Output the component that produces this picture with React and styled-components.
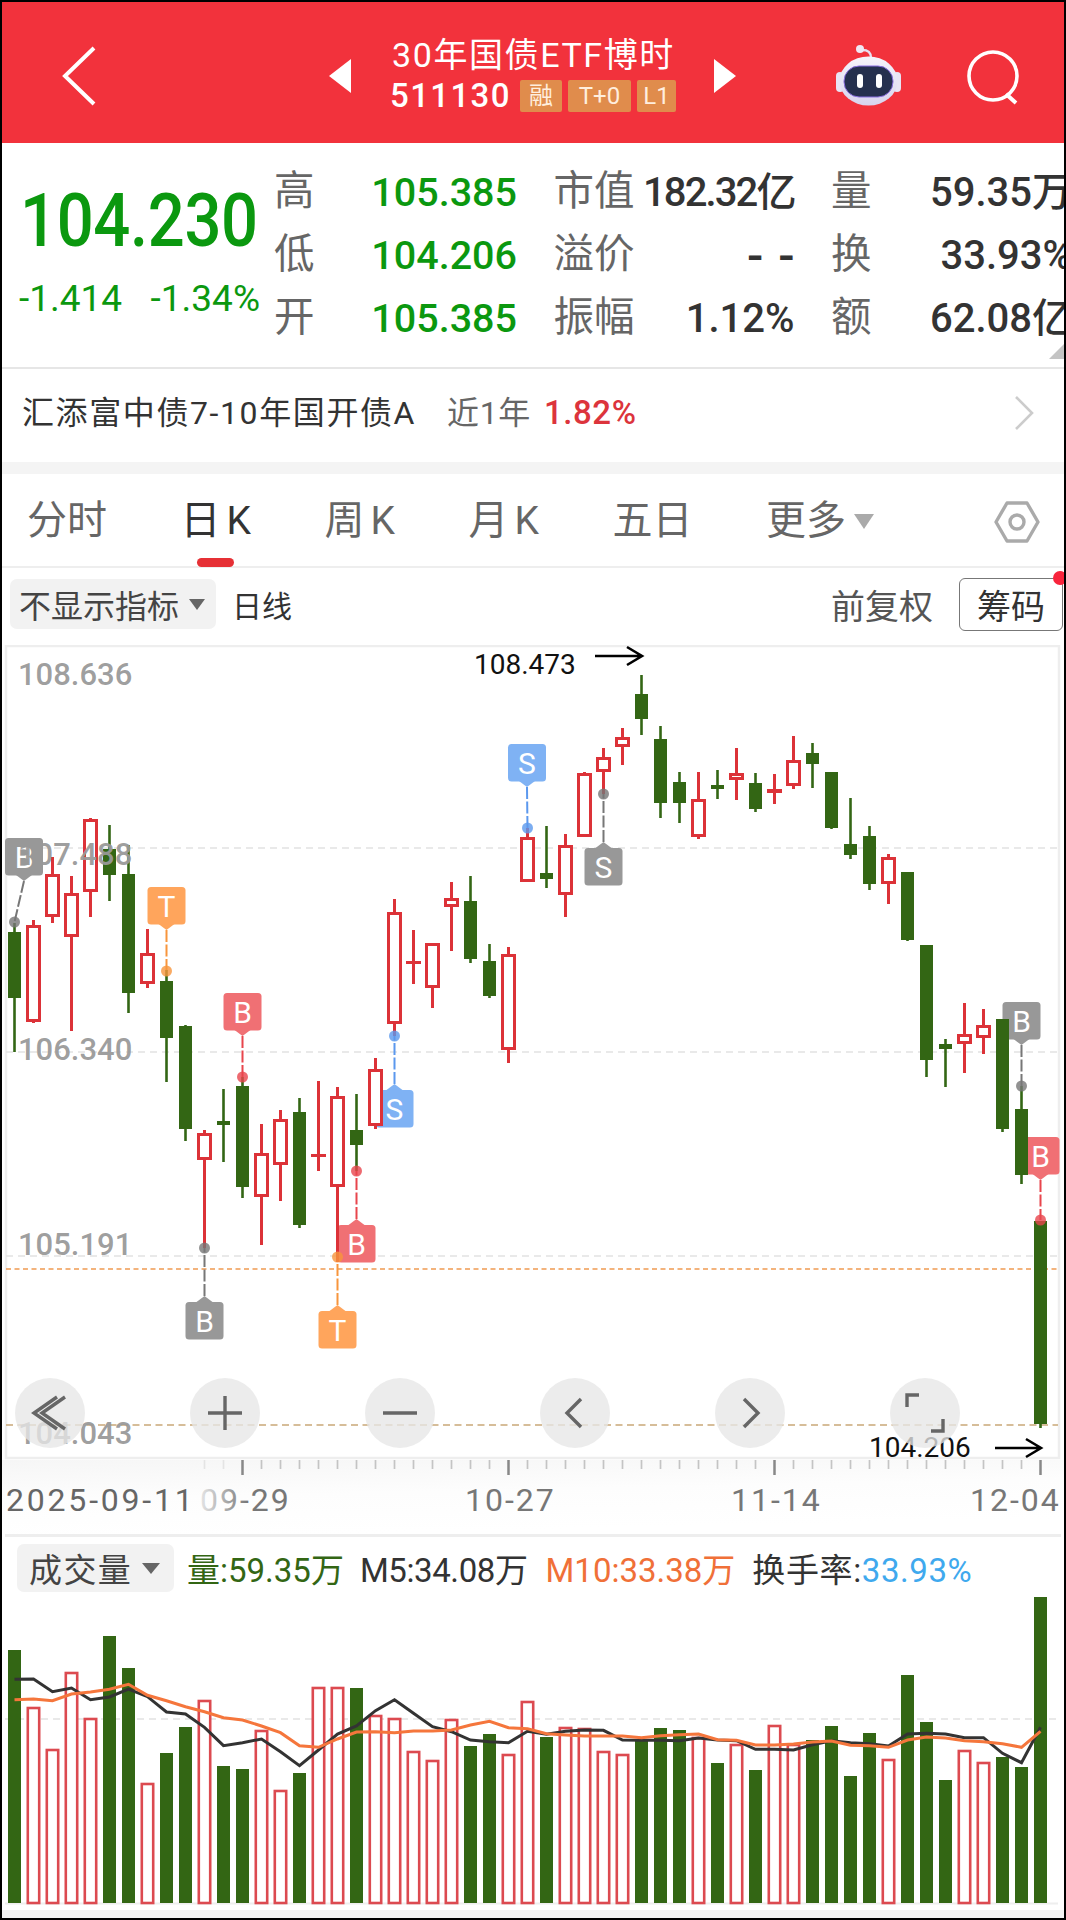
import React from "react";
import styled, { createGlobalStyle } from "styled-components";

const FONT = `Roboto, "Noto Sans CJK SC", sans-serif`;
const RED = "#dc3238";
const GREEN = "#336614";

const Global = createGlobalStyle`
  html, body { margin: 0; padding: 0; background: #000; }
  * { box-sizing: border-box; }
`;

const Page = styled.div`
  width: 1066px; height: 1920px; overflow: hidden; position: relative;
  background: #fff; border: 2px solid #000; font-family: ${FONT};
`;

/* ---------- header ---------- */
const Header = styled.header`
  height: 141px; background: #f2323c; color: #fff;
  display: flex; align-items: flex-start; position: relative;
`;
const BackBtn = styled.div`
  width: 327px; padding: 44px 0 0 59px; flex: none;
  svg { display: block; }
`;
const Tri = styled.div`
  width: 0; height: 0; margin-top: 57px; flex: none;
  border-top: 17px solid transparent; border-bottom: 17px solid transparent;
  ${p => p.$right ? "border-left: 22px solid #fff;" : "border-right: 22px solid #fff;"}
`;
const TitleBox = styled.div`
  width: 363px; flex: none; padding-left: 39px; padding-top: 33px;
`;
const Title = styled.div`
  font-size: 34px; line-height: 40px; letter-spacing: 1.6px; font-weight: 400; white-space: nowrap; margin-left: 2px;
`;
const CodeRow = styled.div`
  display: flex; align-items: center; gap: 6px; margin-top: 5px; height: 32px;
`;
const Code = styled.span`
  font-size: 33px; letter-spacing: 1.4px; font-weight: 500; width: 124px; line-height: 32px;
`;
const Tag = styled.span`
  height: 32px; background: #e08c4c; border-radius: 2px; color: #ffeede;
  font-size: 24px; line-height: 32px; text-align: center; width: ${p => p.$w}px;
`;
const HeadIcons = styled.div`
  display: flex; align-items: flex-start; padding: 42px 0 0 99px; gap: 64px;
  svg { display: block; flex: none; }
`;

/* ---------- quote ---------- */
const Quote = styled.section`
  height: 226px; display: flex; position: relative; overflow: hidden;
  border-bottom: 2px solid #e6e6e6;
`;
const PriceCol = styled.div`
  width: 272px; flex: none; color: #0b980f; padding-left: 18px;
`;
const Price = styled.div`
  font-size: 74px; line-height: 76px; font-weight: 500; letter-spacing: -0.4px; margin-top: 40px;
  transform: scaleX(.88); transform-origin: left center;
`;
const SubPrices = styled.div`
  display: flex; justify-content: space-between;
  margin: 20px 0 0 -1px; font-size: 37px; line-height: 40px; width: 241px; white-space: nowrap;
`;
const Stats = styled.div`
  display: grid; grid-template-columns: 243px 241px 241px; column-gap: 36.5px;
  grid-auto-rows: 63px; padding-top: 18px; flex: none;
`;
const Stat = styled.div`
  display: flex; justify-content: space-between; align-items: center; white-space: nowrap;
`;
const StatLabel = styled.span`
  font-size: 40.5px; color: #666; line-height: 50px; margin-top: -4px;
`;
const StatValue = styled.span`
  font-size: ${p => p.$fs || 40}px; line-height: 50px; font-weight: 500;
  color: ${p => p.$green ? "#0b980f" : "#333"}; letter-spacing: ${p => p.$ls || 0}px;
  margin-right: ${p => p.$mr || 0}px;
`;
const Corner = styled.div`
  position: absolute; right: 0; bottom: 8px; width: 0; height: 0;
  border-left: 15px solid transparent; border-bottom: 15px solid #c4c4c4;
`;

/* ---------- fund ---------- */
const FundRow = styled.div`
  height: 93px; display: flex; align-items: center; padding: 0 30px 5px 20px;
  font-size: 32px; line-height: 40px; white-space: nowrap;
`;
const FundName = styled.span` color: #333; letter-spacing: 1.6px; `;
const FundTerm = styled.span` color: #666; margin-left: 31px; letter-spacing: 0.6px; `;
const FundRate = styled.span` color: #dc343c; margin-left: 13px; font-weight: 500; font-size: 33px; letter-spacing: .6px; `;
const FundArrow = styled.span` margin-left: auto; display: flex; `;

const Gap = styled.div` height: 12px; background: #f4f4f4; `;

/* ---------- tabs ---------- */
const Tabs = styled.nav`
  height: 94px; display: flex; align-items: center; padding: 0 0 2px 25px; gap: 73.5px; position: relative;
  border-bottom: 2px solid #eee;
`;
const Tab = styled.span`
  font-size: 40px; line-height: 50px; color: ${p => p.$on ? "#333" : "#666"}; display: flex; align-items: center;
  position: relative; margin-top: 4px; white-space: nowrap;
  ${p => p.$on && `&::after { content:""; position:absolute; left: 16px; right: 17px; bottom: -21px; height: 9px; border-radius: 5px; background: #e63035; }`}
`;
const KLetter = styled.span` margin-left: 6px; font-size: 39px; `;
const Caret = styled.i`
  display: inline-block; width: 0; height: 0; margin-left: ${p => p.$ml}px;
  border-left: ${p => p.$s}px solid transparent; border-right: ${p => p.$s}px solid transparent;
  border-top: ${p => p.$h}px solid ${p => p.$c};
`;
const Hex = styled.span` position: absolute; left: 992px; top: 26px; display: flex; `;

/* ---------- toolbar ---------- */
const Toolbar = styled.div`
  height: 77px; display: flex; align-items: center; padding: 0 1px 5px 8px; 
`;
const Pill = styled.div`
  height: 50px; padding: 0 11px 0 9px; background: #f2f2f2; border-radius: 7px; display: flex; align-items: center;
  font-size: 32px; color: #444; white-space: nowrap;
`;
const Period = styled.span` font-size: 30px; color: #333; margin-left: 16px; `;
const Adjust = styled.span` margin-left: auto; font-size: 34px; color: #555; `;
const ChipBtn = styled.span`
  margin-left: 26px; width: 104px; height: 53px; border: 1.5px solid #777; border-radius: 6px; font-size: 34px; color: #333;
  display: flex; align-items: center; justify-content: center; position: relative;
  &::after { content:""; position:absolute; right: -5px; top: -8px; width: 14px; height: 14px; border-radius: 50%; background: #f8243c; }
`;

/* ---------- chart ---------- */
const ChartWrap = styled.div` position: relative; height: 815px; `;
const ChartSvg = styled.svg` display: block; font-family: ${FONT}; `;
const FloatBar = styled.div`
  position: absolute; left: 13px; top: 733px; display: flex; gap: 105px;
`;
const RoundBtn = styled.div`
  width: 70px; height: 70px; border-radius: 50%; background: rgba(231,231,231,.78);
  display: flex; align-items: center; justify-content: center;
`;

/* ---------- axis ---------- */
const AxisSvg = styled.svg` display: block; font-family: ${FONT}; `;

/* ---------- volume ---------- */
const VolPanel = styled.section`
  border-top: 3px solid #eee; margin-left: 3px; margin-right: 3px; height: 376px; position: relative;
`;
const Legend = styled.div`
  position: absolute; left: 12px; top: 7px; display: flex; align-items: center; white-space: nowrap; font-size: 33px;
`;
const VolPill = styled(Pill)` height: 48px; width: 157px; padding: 0 0 0 12px; font-size: 33px; letter-spacing: 1.4px; margin-right: 13px; `;
const LegendItem = styled.span`
  color: ${p => p.$c}; margin-right: ${p => p.$mr}px; letter-spacing: ${p => p.$ls || 0}px;
  b { font-weight: 400; color: ${p => p.$v || "inherit"}; }
`;
const VolSvg = styled.svg` display: block; `;
const Foot = styled.div` height: 8px; background: #f4f4f4; `;

/* ---------- data ---------- */
const X = i => 14.5 + 19 * i;
// [color, high, bodyTop, bodyBottom, low]
const C = [
  ["g",923,932,998,1052],["r",920,925,1022,1023],["r",857,874,917,923],["r",876,893,937,1031],["r",818,819,892,917],
  ["g",825,849,875,901],["g",845,874,993,1013],["r",929,953,984,988],["g",970,981,1038,1082],["g",1025,1026,1129,1141],
  ["r",1130,1133,1160,1248],["g",1089,1121,1125,1162],["g",1077,1086,1187,1198],["r",1124,1153,1197,1245],["r",1110,1119,1165,1201],
  ["g",1098,1112,1225,1228],["r",1081,1154,1156,1171],["r",1087,1096,1187,1262],["g",1094,1130,1145,1171],["r",1058,1069,1126,1129],
  ["r",899,912,1024,1036],["r",930,961,964,984],["r",943,943,988,1008],["r",882,898,907,951],["g",876,901,959,963],
  ["g",944,961,996,998],["r",947,954,1050,1063],["r",828,837,882,882],["g",826,873,879,888],["r",834,845,895,917],
  ["r",772,773,837,837],["r",748,757,772,794],["r",728,737,747,765],["g",675,694,719,735],["g",726,739,803,818],
  ["g",772,782,803,823],["r",772,799,837,839],["g",770,785,786,799],["r",748,773,780,800],["g",773,783,809,812],
  ["r",774,789,793,804],["r",736,760,786,789],["g",743,753,764,788],["g",772,772,828,829],["g",798,844,855,859],
  ["g",826,836,884,890],["r",854,857,884,904],["g",872,872,940,941],["g",945,945,1060,1077],["g",1039,1044,1049,1087],
  ["r",1003,1034,1044,1073],["r",1009,1025,1038,1054],["g",1019,1019,1129,1132],["g",1086,1109,1175,1184],["g",1221,1221,1424,1428],
];
// [letter, colour, boxCenterX, boxTop, dotIndex, dotY, dir]
const MC = { gray: "#989898", red: "#f07074", blue: "#7fb2f4", orange: "#ffa55c" };
const LC = { gray: "#777", red: "#e8454c", blue: "#5b98ee", orange: "#f8953c" };
const M = [
  ["B","gray",24,838,0,922,"down"],
  ["T","orange",166.5,887,8,971,"down"],
  ["B","red",242.5,993,12,1077,"down"],
  ["S","blue",394.5,1090,20,1036,"up"],
  ["B","red",356.5,1225,18,1171,"up"],
  ["T","orange",337.5,1311,17,1257,"up"],
  ["B","gray",204.5,1302,10,1248,"up"],
  ["S","blue",527,744,27,828,"down"],
  ["S","gray",603.5,848,31,794,"up"],
  ["B","gray",1021.5,1002,53,1086,"down"],
  ["B","red",1040.5,1137,54,1220,"down"],
];
const YL = [["108.636",685],["107.488",865],["106.340",1060],["105.191",1255],["104.043",1444]];
const VT = [1650,1708,1750,1673,1719,1636,1668,1784,1753,1727,1701,1766,1769,1731,1791,1773,1688,1688,1688,1716,1719,1752,1761,1720,1746,1734,1755,1702,1737,1728,1729,1752,1755,1740,1728,1730,1738,1763,1745,1770,1726,1745,1740,1726,1776,1733,1760,1675,1722,1780,1751,1763,1757,1767,1597];
const M5 = [268,267,305,294,329,321,297,320,366,372,412,467,458,447,485,527,480,432,408,362,329,370,410,425,450,455,458,424,433,424,420,421,450,451,451,452,444,450,452,478,478,480,464,452,458,461,468,432,430,432,443,443,490,518,412];
const M10 = [329,327,332,312,306,298,283,316,332,350,365,383,390,408,428,467,472,447,426,425,428,423,423,420,405,394,413,416,431,435,438,438,438,443,437,434,432,449,451,465,465,462,456,453,466,467,472,450,441,444,452,455,461,472,424];
const line = a => a.map((v, i) => `${X(i)},${(1590 + v / 3).toFixed(1)}`).join(" ");

/* ---------- chart parts ---------- */
const Marker = ({ m }) => {
  const [l, c, bx, by, i, dy, dir] = m;
  const dx = X(i);
  const down = dir === "down";
  const tipY = down ? by + 43 : by - 6;
  const pts = down
    ? `${bx - 8},${by + 37} ${bx + 8},${by + 37} ${bx},${tipY}`
    : `${bx - 8},${by} ${bx + 8},${by} ${bx},${tipY}`;
  return (
    <g>
      <rect x={bx - 19} y={by} width={38} height={37.5} rx={3.5} fill={MC[c]} />
      <polygon points={pts} fill={MC[c]} />
      <line x1={bx} y1={tipY} x2={dx} y2={dy} stroke={LC[c]} strokeWidth={2} strokeDasharray="12 2.5" />
      <text x={bx} y={by + 29.5} textAnchor="middle" fontSize={30} fill="#fff">{l}</text>
    </g>
  );
};

const Candle = ({ c, i }) => {
  const [k, h, t, b, l] = c;
  const x = X(i);
  if (k === "g") {
    return (
      <g>
        <line x1={x} y1={h} x2={x} y2={l} stroke={GREEN} strokeWidth={2.6} />
        <rect x={x - 6.5} y={t} width={13} height={Math.max(b - t, 4)} fill={GREEN} />
      </g>
    );
  }
  const thin = b - t < 5;
  return (
    <g>
      <line x1={x} y1={h} x2={x} y2={l} stroke={RED} strokeWidth={3} />
      {thin
        ? <rect x={x - 7.5} y={t} width={15} height={Math.max(b - t, 3)} fill={RED} />
        : <rect x={x - 6} y={t + 1.5} width={12} height={b - t - 3} fill="#fff" stroke={RED} strokeWidth={3} />}
    </g>
  );
};

const Arrow = ({ x1, x2, y }) => (
  <path d={`M${x1} ${y}H${x2}M${x2 - 15} ${y - 9}L${x2} ${y}L${x2 - 15} ${y + 9}`} fill="none" stroke="#000" strokeWidth={2.6} />
);

const Chart = () => (
  <ChartSvg width={1062} height={815} viewBox="2 645 1062 815">
    <rect x={6} y={646} width={1053} height={812} fill="#fff" stroke="#eee" strokeWidth={2.5} />
    {[848, 1052, 1256].map(y => (
      <line key={y} x1={6} x2={1058} y1={y} y2={y} stroke="#e2e2e2" strokeWidth={1.5} strokeDasharray="7 5" />
    ))}
    <line x1={6} x2={1058} y1={1269} y2={1269} stroke="#ef9a52" strokeWidth={1.7} strokeDasharray="5 3.5" />
    <line x1={6} x2={1058} y1={1425} y2={1425} stroke="#c9a878" strokeWidth={1.7} strokeDasharray="7 4.5" />
    {M.map((m, i) => <Marker key={i} m={m} />)}
    {C.map((c, i) => <Candle key={i} c={c} i={i} />)}
    {M.map((m, i) => <circle key={i} cx={X(m[4])} cy={m[5]} r={5.5} fill={LC[m[1]]} opacity={0.8} />)}
    {YL.map(([t, y]) => (
      <text key={t} x={18} y={y} fontSize={31} fontWeight={500} fill="#999" fillOpacity={0.95}>{t}</text>
    ))}
    <text x={474} y={674} fontSize={28} fill="#111">108.473</text>
    <Arrow x1={595} x2={642} y={656} />
    <text x={869} y={1457} fontSize={28} fill="#111">104.206</text>
    <Arrow x1={995} x2={1041} y={1448} />
  </ChartSvg>
);

const S = { fill: "none", stroke: "#666", strokeWidth: 3.4 };
const Buttons = () => (
  <FloatBar>
    <RoundBtn><svg width="40" height="40" viewBox="0 0 40 40"><path d="M27 4L4 20l23 16M35 4L12 20l23 16" {...S} /></svg></RoundBtn>
    <RoundBtn><svg width="40" height="40" viewBox="0 0 40 40"><path d="M3 20H37M20 3V37" {...S} /></svg></RoundBtn>
    <RoundBtn><svg width="40" height="40" viewBox="0 0 40 40"><path d="M3 20H37" {...S} /></svg></RoundBtn>
    <RoundBtn><svg width="40" height="40" viewBox="0 0 40 40"><path d="M26 6L12 20l14 14" {...S} /></svg></RoundBtn>
    <RoundBtn><svg width="40" height="40" viewBox="0 0 40 40"><path d="M14 6l14 14-14 14" {...S} /></svg></RoundBtn>
    <RoundBtn><svg width="40" height="40" viewBox="0 0 40 40"><path d="M2 14V2H14M38 26V38H26" {...S} /></svg></RoundBtn>
  </FloatBar>
);

const Axis = () => {
  const ticks = [];
  for (let i = 10; i < 55; i++) ticks.push(i);
  const major = { 12: 1, 26: 1, 40: 1, 54: 1 };
  return (
    <AxisSvg width={1062} height={74} viewBox="2 1460 1062 74">
      <defs>
        <linearGradient id="axbg" x1="0" y1="0" x2="0.3" y2="1">
          <stop offset="0" stopColor="#f6f6f6" /><stop offset="0.5" stopColor="#fdfdfd" /><stop offset="1" stopColor="#fff" />
        </linearGradient>
        <linearGradient id="fadeText" gradientUnits="userSpaceOnUse" x1="198" y1="0" x2="248" y2="0">
          <stop offset="0" stopColor="#eaeaea" /><stop offset="1" stopColor="#777" />
        </linearGradient>
      </defs>
      <rect x={2} y={1460} width={1062} height={74} fill="url(#axbg)" />
      {ticks.map(i => (
        <line key={i} x1={X(i)} x2={X(i)} y1={1460} y2={major[i] ? 1475 : 1469}
          stroke={major[i] ? "#888" : i < 12 ? "#e4e4e4" : "#c4c4c4"} strokeWidth={major[i] ? 2.5 : 1.7} />
      ))}
      {[["2025-09-11", 6], ["09-29", 200], ["10-27", 465], ["11-14", 731], ["12-04", 970]].map(([t, x], i) => (
        <text key={t} x={x} y={1511} fontSize={32} letterSpacing={i === 0 ? 2.8 : 2}
          fill={i === 0 ? "#666" : i === 1 ? "url(#fadeText)" : "#777"}>{t}</text>
      ))}
    </AxisSvg>
  );
};

const Volume = () => (
  <VolSvg width={1056} height={373} viewBox="5 1537 1056 373">
    <rect x={5} y={1537} width={1056} height={373} fill="#fff" />
    <line x1={5} x2={1058} y1={1719} y2={1719} stroke="#e2e2e2" strokeWidth={1.5} strokeDasharray="7 5" />
    <line x1={5} x2={1058} y1={1903.5} y2={1903.5} stroke="#eee" strokeWidth={2} />
    {VT.map((t, i) => C[i][0] === "g"
      ? <rect key={i} x={X(i) - 6.5} y={t} width={13} height={1903 - t} fill={GREEN} />
      : <rect key={i} x={X(i) - 5.7} y={t} width={11.4} height={1903 - t} fill="#fff" stroke="#dc4a50" strokeWidth={2.6} />)}
    <polyline points={line(M5)} fill="none" stroke="#333" strokeWidth={3} />
    <polyline points={line(M10)} fill="none" stroke="#f5763c" strokeWidth={3} />
  </VolSvg>
);

const Robot = () => (
  <svg width="68" height="62" viewBox="0 0 68 62">
    <defs>
      <linearGradient id="rh" x1="0" y1="0" x2="0" y2="1">
        <stop offset="0" stopColor="#f6f4fb" /><stop offset="1" stopColor="#d8d4ee" />
      </linearGradient>
    </defs>
    <path d="M36 14C36 8 33 6 27 6" fill="none" stroke="#e6e0f2" strokeWidth="2.4" />
    <circle cx="25" cy="5" r="4" fill="#f0e8f4" />
    <rect x="1" y="28" width="8" height="20" rx="4" fill="#e8e4f4" />
    <rect x="58" y="28" width="8" height="20" rx="4" fill="#e8e4f4" />
    <ellipse cx="33.5" cy="37" rx="29" ry="24.5" fill="url(#rh)" />
    <rect x="9" y="22" width="49" height="31" rx="15" fill="#25304e" stroke="#8a6fe0" strokeWidth="1" />
    <rect x="22" y="30" width="6" height="14" rx="3" fill="#fff" />
    <rect x="41" y="30" width="6" height="14" rx="3" fill="#fff" />
  </svg>
);

const SearchIcon = styled.svg` margin-top: 6px; `;

export default function App() {
  return (
    <Page>
      <Global />
      <Header>
        <BackBtn>
          <svg width="36" height="60" viewBox="0 0 36 60"><path d="M33 2L4 30l29 28" fill="none" stroke="#fff" strokeWidth="4" strokeLinejoin="miter" /></svg>
        </BackBtn>
        <Tri />
        <TitleBox>
          <Title>30年国债ETF博时</Title>
          <CodeRow>
            <Code>511130</Code>
            <Tag $w={42}>融</Tag>
            <Tag $w={63}>T+0</Tag>
            <Tag $w={39}>L1</Tag>
          </CodeRow>
        </TitleBox>
        <Tri $right />
        <HeadIcons>
          <Robot />
          <SearchIcon width="58" height="58" viewBox="0 0 58 58">
            <circle cx="26" cy="26" r="24" fill="none" stroke="#fff" strokeWidth="3.6" />
            <path d="M39 44L49 53" stroke="#fff" strokeWidth="4" />
          </SearchIcon>
        </HeadIcons>
      </Header>

      <Quote>
        <PriceCol>
          <Price>104.230</Price>
          <SubPrices><span>-1.414</span><span>-1.34%</span></SubPrices>
        </PriceCol>
        <Stats>
          <Stat><StatLabel>高</StatLabel><StatValue $green $fs={39.5}>105.385</StatValue></Stat>
          <Stat><StatLabel>市值</StatLabel><StatValue $ls={-1.9}>182.32亿</StatValue></Stat>
          <Stat><StatLabel>量</StatLabel><StatValue>59.35万</StatValue></Stat>
          <Stat><StatLabel>低</StatLabel><StatValue $green $fs={39.5}>104.206</StatValue></Stat>
          <Stat><StatLabel>溢价</StatLabel><StatValue $fs={48} $ls={15} $mr={-15}>--</StatValue></Stat>
          <Stat><StatLabel>换</StatLabel><StatValue>33.93%</StatValue></Stat>
          <Stat><StatLabel>开</StatLabel><StatValue $green $fs={39.5}>105.385</StatValue></Stat>
          <Stat><StatLabel>振幅</StatLabel><StatValue>1.12%</StatValue></Stat>
          <Stat><StatLabel>额</StatLabel><StatValue>62.08亿</StatValue></Stat>
        </Stats>
        <Corner />
      </Quote>

      <FundRow>
        <FundName>汇添富中债7-10年国开债A</FundName>
        <FundTerm>近1年</FundTerm>
        <FundRate>1.82%</FundRate>
        <FundArrow>
          <svg width="20" height="34" viewBox="0 0 20 34"><path d="M2 1l16 16L2 33" fill="none" stroke="#ccc" strokeWidth="2.6" /></svg>
        </FundArrow>
      </FundRow>
      <Gap />

      <Tabs>
        <Tab>分时</Tab>
        <Tab $on>日<KLetter>K</KLetter></Tab>
        <Tab>周<KLetter>K</KLetter></Tab>
        <Tab>月<KLetter>K</KLetter></Tab>
        <Tab>五日</Tab>
        <Tab>更多<Caret $s={10} $h={15} $c="#aaa" $ml={8} /></Tab>
        <Hex>
          <svg width="46" height="44" viewBox="0 0 46 44">
            <path d="M13 3H33L44 22L33 41H13L2 22Z" fill="none" stroke="#aaa" strokeWidth="3.4" strokeLinejoin="round" />
            <circle cx="23" cy="22" r="7" fill="none" stroke="#aaa" strokeWidth="3.4" />
          </svg>
        </Hex>
      </Tabs>

      <Toolbar>
        <Pill>不显示指标<Caret $s={8} $h={11} $c="#666" $ml={10} /></Pill>
        <Period>日线</Period>
        <Adjust>前复权</Adjust>
        <ChipBtn>筹码</ChipBtn>
      </Toolbar>

      <ChartWrap>
        <Chart />
        <Buttons />
      </ChartWrap>
      <Axis />

      <VolPanel>
        <Volume />
        <Legend>
          <VolPill>成交量<Caret $s={9} $h={11} $c="#666" $ml={10} /></VolPill>
          <LegendItem $c={GREEN} $mr={16}>量:59.35万</LegendItem>
          <LegendItem $c="#333" $mr={18} $ls={-0.4}>M5:34.08万</LegendItem>
          <LegendItem $c="#f07038" $mr={17}>M10:33.38万</LegendItem>
          <LegendItem $c="#333" $v="#3fa9ee" $ls={0.6}>换手率:<b>33.93%</b></LegendItem>
        </Legend>
      </VolPanel>
      <Foot />
    </Page>
  );
}
